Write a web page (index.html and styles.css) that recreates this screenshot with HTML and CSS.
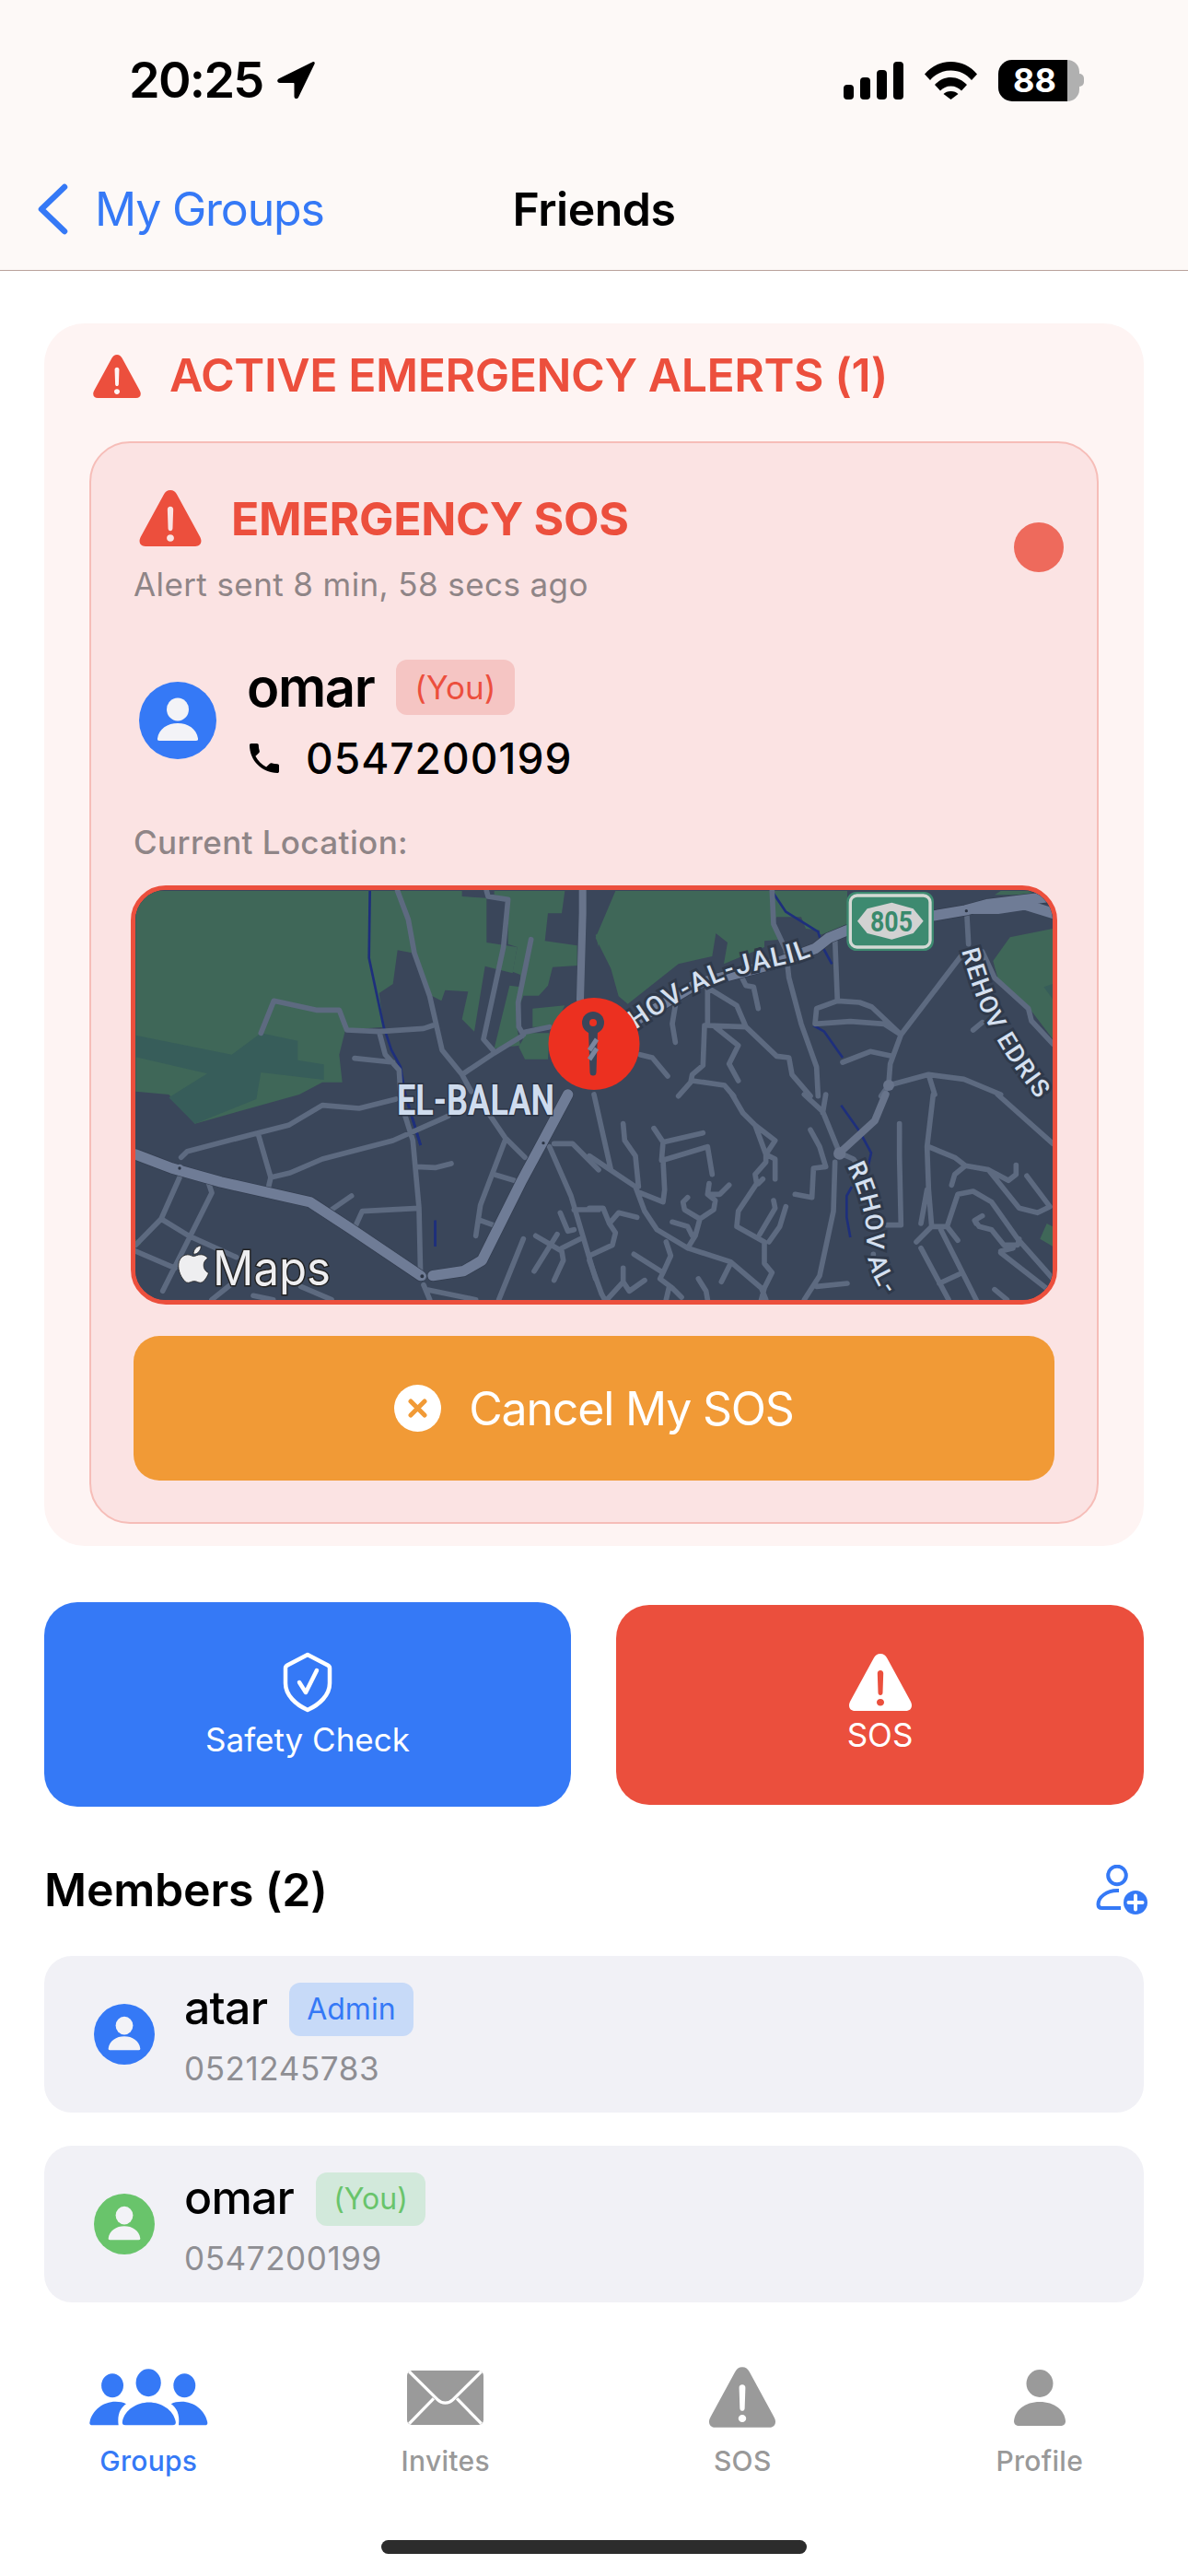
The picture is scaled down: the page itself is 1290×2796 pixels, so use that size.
FILE: index.html
```html
<!DOCTYPE html>
<html lang="en">
<head>
<meta charset="utf-8">
<title>Friends</title>
<link rel="stylesheet" href="styles.css">
</head>
<body>
<svg class="defs" aria-hidden="true">
  <symbol id="alert" viewBox="0 0 68 62">
    <path fill-rule="evenodd" d="M34 0c-3.4 0-5.6 1.7-7.4 5L1.8 50.5C.6 52.700 0 54.300 0 56c0 3.700 2.400 6 6.500 6h55c4.100 0 6.500-2.300 6.500-6 0-1.700-.6-3.300-1.800-5.500L41.400 5C39.600 1.700 37.400 0 34 0ZM34 18c2 0 3.300 1.300 3.200 3.300l-.7 21c-.1 1.700-1 2.700-2.500 2.700s-2.400-1-2.500-2.700l-.7-21c-.1-2 1.200-3.300 3.200-3.300Zm0 31c2.300 0 4 1.700 4 3.800s-1.700 3.800-4 3.800-4-1.700-4-3.800 1.700-3.800 4-3.800Z"/>
  </symbol>
  <symbol id="person" viewBox="0 0 84 84">
    <circle cx="42" cy="42" r="42"/>
    <ellipse class="person-cut" cx="42" cy="30" rx="12" ry="12.500"/>
    <path class="person-cut" d="M22 64c-1.500 0-2.300-.8-2-2.500C21.500 51 31 45 42 45s20.500 6 22 16.500c.3 1.700-.5 2.500-2 2.500Z"/>
  </symbol>
  <symbol id="phone" viewBox="3 3 18 18">
    <path d="M6.620 10.790c1.440 2.830 3.760 5.140 6.590 6.590l2.200-2.200c.27-.27.67-.36 1.020-.24 1.120.37 2.330.57 3.570.57.55 0 1 .45 1 1V20c0 .55-.45 1-1 1-9.390 0-17-7.610-17-17 0-.55.45-1 1-1h3.500c.55 0 1 .45 1 1 0 1.250.2 2.450.57 3.570.11.35.03.74-.25 1.020l-2.200 2.200z"/>
  </symbol>
</svg>

<div class="screen">
  <header class="top">
    <div class="status">
      <div class="status-left">
        <span class="time">20:25</span>
        <svg class="loc" viewBox="0 0 41 40"><path d="M38.500.3 2 18.300c-2.800 1.400-2.200 4.700.9 4.700h14.600c.7 0 1 .3 1 1v13.600c0 3 3.200 3.600 4.600.8L40.500 2.600C41.300.9 40.100-.4 38.500.3Z"/></svg>
      </div>
      <div class="status-right">
        <svg class="signal" viewBox="0 0 65 41"><rect x="0" y="25" width="11" height="16" rx="4"/><rect x="18" y="17" width="11" height="24" rx="4"/><rect x="36" y="9" width="11" height="32" rx="4"/><rect x="54" y="0" width="11" height="41" rx="4"/></svg>
        <svg class="wifi" viewBox="0 0 57 41"><path d="M0 13.500C7 5 17 0 28.500 0S50 5 57 13.500L51 20C45.500 13.500 37.500 9.500 28.500 9.500S11.500 13.500 6 20Z"/><path d="M11 25C16 20 21.500 17 28.500 17S41 20 46 25l-6 6.500c-3-3-6.500-5-11.500-5s-8.500 2-11.500 5Z"/><path d="M20.500 35c2-2 4.500-3 8-3s6 1 8 3l-8 6Z"/></svg>
        <div class="battery"><span class="battery-level">88</span><span class="battery-rest"></span><span class="battery-nub"></span></div>
      </div>
    </div>
    <nav class="nav">
      <a class="back"><svg class="chevron" viewBox="0 0 34 56"><path d="M30 4 5 28l25 24"/></svg><span>My Groups</span></a>
      <h1 class="nav-title">Friends</h1>
      <span></span>
    </nav>
  </header>

  <main class="content">
    <section class="panel">
      <div class="panel-head">
        <svg class="panel-icon"><use href="#alert"/></svg>
        <h2 class="panel-title">ACTIVE EMERGENCY ALERTS (1)</h2>
      </div>
      <article class="card">
        <div class="card-head">
          <div class="card-head-text">
            <div class="sos-row">
              <svg class="sos-icon"><use href="#alert"/></svg>
              <h3 class="sos-title">EMERGENCY SOS</h3>
            </div>
            <p class="sent">Alert sent 8 min, 58 secs ago</p>
          </div>
          <span class="dot"></span>
        </div>
        <div class="who">
          <svg class="who-avatar avatar-blue"><use href="#person"/></svg>
          <div>
            <div class="who-name-row">
              <span class="who-name">omar</span>
              <span class="badge badge-red">(You)</span>
            </div>
            <div class="who-phone-row">
              <svg class="phone-icon"><use href="#phone"/></svg>
              <span class="who-phone">0547200199</span>
            </div>
          </div>
        </div>
        <p class="loc-label">Current Location:</p>
        <div class="map">
          <svg class="map-svg" viewBox="147 966 996 445">
            <defs>
              <path id="path-jalil" d="M690 1118C730 1090 770 1066 810 1056S870 1046 900 1028"/>
              <path id="path-edris" d="M1044 1032C1052 1060 1060 1085 1072 1110 1088 1140 1105 1165 1128 1195"/>
              <path id="path-al" d="M920 1266C932 1290 942 1320 941 1350 941 1370 948 1390 965 1412"/>
            </defs>
            <rect class="m-bg" x="147" y="966" width="996" height="445"/>
            <g transform="translate(140 958) scale(.33333)">
              <path class="m-green" d="M22 27H1085V45L1165 50V195L1265 210 1250 295 1160 272 1125 485 1085 445 1105 355 1030 350 1018 385 980 365 930 230 875 220 860 330 815 360 830 470 705 480 685 560 695 650 630 650 555 690 215 785 130 690 22 680Z"/>
              <path class="m-green" d="M1190 27H1420L1410 100 1365 100 1355 190 1460 205 1460 270 1380 275 1365 335 1335 368 1285 368 1265 420 1262 460 1275 530 1190 540 1240 335 1275 340 1275 300 1250 290 1265 210 1235 200 1235 50 1190 40Z"/>
              <path class="m-green" d="M1315 410 1420 400 1385 470 1315 470Z"/>
              <path class="m-green" d="M1270 535 1290 575 1365 575 1370 490 1295 490Z"/>
              <path class="m-green" d="M1520 170 1530 165 1530 210Z"/>
              <path class="m-teal" d="M22 497 335 560 430 490 550 515 550 578 635 592 635 642 430 618 415 705 215 785 130 700 255 622 22 568Z"/>
              <path class="m-river" d="M785 27 782 245 800 330 830 470 855 545 885 600 900 690 950 855"/>
              <path class="m-river" d="M998 1100V1185"/>
              <path class="m-road" d="M430 490 472 385 610 415 685 415 710 480 815 485 960 475 990 465M815 485 835 560 880 610 885 690M735 572 860 585M875 27 910 120 930 230 980 370 1020 545 1085 625 1115 680M1235 55 1170 45 1165 27M1235 55 1220 210 1155 510 1190 550M1085 625 1190 555 1280 500 1290 487 1370 470M1310 185 1268 390 1270 470 1285 495"/>
              <path class="m-road m-mid" d="M1478 27 1478 100 1470 380"/>
            </g>
            <g transform="translate(640 958) scale(.33333)">
              <path class="m-green" d="M85 27 20 180 70 280 95 370 125 395 290 265 400 240 412 165 450 195 438 265 570 210 570 190 625 185 600 130 610 112 690 112 705 150 750 155 750 170 840 145 840 27Z"/>
              <path class="m-green" d="M1320 40 1340 27H1430L1460 40Z"/>
              <path class="m-green" d="M1510 150 1370 178 1315 255 1330 310 1430 405 1510 510Z"/>
              <path class="m-teal" d="M1480 340 1510 330V380Z"/>
              <path class="m-river" d="M600 35 640 95 745 160 760 210 790 265M730 465 765 485 825 570"/>
              <path class="m-road" d="M595 27 600 135 640 220 650 310 690 460 740 600 745 695M800 185 808 385M808 385 740 410 735 460 850 452 960 460 1015 495 920 405 880 390 808 385M1015 495 980 590 975 655M1210 240 1015 495M825 585 915 550 985 565M1230 110 1235 200M1280 225 1320 310 1430 410 1440 450 1510 525M975 660 1105 625 1220 640 1340 690M1105 625 1125 690M975 660 950 695M385 345 385 465 510 470 480 400 390 345M375 465 370 595 335 625 330 650 290 695M335 645 440 660 470 695M410 470 485 530 455 590 485 645M510 470 610 565 650 570 660 625 720 695M495 305 510 335 535 340 550 410M280 400 270 460 280 520M165 560 205 570 255 630M1250 480 1280 455"/>
              <path class="m-road m-main m-case" d="M150 450 350 330 600 265 735 215 780 180 840 155M1120 108 1225 90 1300 70 1510 45"/>
              <path class="m-road m-main" d="M150 450 350 330 600 265 735 215 780 180 840 155M1120 108 1225 90 1300 70 1510 45M1250 85 1330 85 1420 72 1510 100"/>
              <circle class="m-ring" cx="1228" cy="92" r="9"/>
              <circle class="m-node" cx="975" cy="660" r="18"/>
            </g>
            <g transform="translate(140 1188) scale(.33333)">
              <path class="m-green" d="M22 470 40 485 22 500Z"/>
              <path class="m-river" d="M900 0 950 165M998 410V495"/>
              <path class="m-road" d="M170 205 190 185 420 125 520 100 630 35 750 45 870 15M420 125 462 270 455 300M462 270 525 255 630 210 860 150 1040 70M260 290 270 320 195 470 110 640M165 270 105 405 22 490M105 405 195 460 350 530M22 510 150 565M660 375 725 330M735 435 760 380 945 370 950 590M900 70 925 150 945 370M935 235 1000 238 1050 225M1130 0 1225 140 1290 205M1225 150 1145 360 1130 460M1195 262 1255 280M1145 410 1195 428M1370 170 1440 330 1520 600M1385 160 1445 160 1530 245M1450 375 1530 375M1405 385 1430 445 1450 440M1325 460 1410 510 1415 540 1385 605M1395 455 1320 575M1410 500 1470 470M1285 470 1205 668M960 620 980 668M970 635 1130 668M405 655 470 668M560 625 660 668M330 620 270 668"/>
              <path class="m-road m-main m-case" d="M22 195 140 240 300 285 590 350 720 435 950 590M1430 0 1350 150 1280 280 1180 480 1150 540 1090 575 990 590"/>
              <path class="m-road m-main" d="M22 195 140 240 300 285 590 350 720 435 950 590M1430 0 1350 150 1280 280 1180 480 1150 540 1090 575 990 590"/>
              <circle class="m-ring" cx="165" cy="240" r="9"/>
              <circle class="m-ring" cx="955" cy="592" r="10"/>
              <circle class="m-ring" cx="1350" cy="158" r="9"/>
            </g>
            <g transform="translate(640 1188) scale(.33333)">
              <path class="m-green" d="M1490 420 1510 430V495L1468 470Z"/>
              <path class="m-river" d="M820 35 880 120 918 190 908 235M855 300 838 330 838 400 850 465"/>
              <path class="m-road" d="M15 0 70 245M0 200 150 300 180 380 220 440 320 500 460 545 560 630 575 668M110 95 115 150 150 200 160 300M210 110 240 155 370 125M240 155 235 215 385 170 400 260M240 215 245 310 240 350 165 320M0 370 45 370 65 420 85 450 75 490 0 525M65 420 95 385 155 400M390 290 385 325 410 345 405 375 360 405 310 375 305 350 320 335M390 325 425 325 455 295M360 405 345 460 320 500M270 415 320 430 335 460M465 0 500 60 540 100 605 150 575 195 540 100M575 195 605 210 605 275M575 195 575 220 540 260 545 290 485 380 480 430 570 480 570 550 595 580 570 630 560 668M550 290 565 275M600 345 605 370 555 455M640 365 620 430 585 480M145 520 240 580M240 580 265 525 250 480M240 580 230 600 270 630 300 660M260 625 250 668M110 565 110 610 130 640 180 605M110 610 60 665M355 600 380 640 385 668M460 550 430 610M0 540 40 650 50 668M700 0 760 55 815 190M770 0 760 60M720 115 750 170 770 235M770 235 730 240 725 335 670 325M800 220 795 380 750 590 700 668M740 625 840 615M815 190 860 210 895 260M925 520V560M1010 95 1010 200 1015 425 970 425M1120 0 1100 170 1105 310 1115 430 1065 480M1100 310 1080 420M1105 170 1190 205 1225 232 1300 245 1365 280 1390 260 1390 230M1225 232 1190 260 1180 295M1300 245 1400 370 1460 385 1500 365 1425 265M1330 0 1510 160M1115 430 1165 430 1200 475M1145 440 1260 668M1080 500 1170 668M1140 615 1205 585M1165 430 1185 370 1200 325 1250 315 1310 350 1395 470 1510 600M1260 420 1255 410 1280 395M1255 410 1270 430 1310 440 1350 490 1395 490 1400 470M1340 510 1380 500M1340 515 1500 640M1320 635 1360 668"/>
              <path class="m-road m-mid" d="M965 0 930 85 815 190"/>
              <circle class="m-node" cx="815" cy="192" r="20"/>
            </g>
            <text class="m-city" x="431" y="1210" textLength="171" lengthAdjust="spacingAndGlyphs">EL-BALAN</text>
            <text class="m-street m-street-lg"><textPath href="#path-jalil">HOV-AL-JALIL</textPath></text>
            <text class="m-street"><textPath href="#path-edris">REHOV EDRIS</textPath></text>
            <text class="m-street"><textPath href="#path-al">REHOV AL-</textPath></text>
            <g transform="translate(640 958) scale(.33333)">
              <rect class="shield-out" x="838" y="30" width="284" height="192" rx="32"/>
              <rect class="shield-line" x="850" y="42" width="260" height="168" rx="22"/>
              <path class="shield-hex" d="M873 125 905 85 985 65 1055 85 1088 125 1055 165 985 185 905 165Z"/>
            </g>
            <text class="m-shield" x="945" y="1011" textLength="46" lengthAdjust="spacingAndGlyphs">805</text>
            <path class="pin-bg" d="M645 1083a49.500 50 0 1 0 .01 0Z"/>
            <circle class="pin-head" cx="644" cy="1110" r="12"/>
            <circle class="pin-dot" cx="644" cy="1110" r="4"/>
            <path class="pin-needle" d="M639 1118h10l-1.500 46c-.2 2.500-1.200 3.500-3.500 3.500s-3.300-1-3.500-3.500Z"/>
            <path class="pin-stripe" d="M640 1150 648 1138M640 1140 648 1128"/>
            <path class="m-apple" transform="translate(190 1352) scale(1.680)" d="M12.152 6.896c-.948 0-2.415-1.078-3.960-1.040-2.040.027-3.910 1.183-4.961 3.014-2.117 3.675-.546 9.103 1.519 12.090 1.013 1.454 2.208 3.090 3.792 3.039 1.520-.065 2.090-.987 3.935-.987 1.831 0 2.350.987 3.960.948 1.637-.026 2.676-1.480 3.676-2.948 1.156-1.688 1.636-3.325 1.662-3.415-.039-.013-3.182-1.221-3.220-4.857-.026-3.040 2.480-4.494 2.597-4.559-1.429-2.090-3.623-2.324-4.390-2.376-2-.156-3.675 1.090-4.610 1.090zM15.530 3.830c.843-1.012 1.400-2.427 1.245-3.830-1.207.052-2.662.805-3.532 1.818-.78.896-1.454 2.338-1.273 3.714 1.338.104 2.715-.688 3.559-1.701"/>
            <text class="m-maps" x="231" y="1395" textLength="128" lengthAdjust="spacingAndGlyphs">Maps</text>
          </svg>
        </div>
        <button class="cancel">
          <svg class="cancel-icon" viewBox="0 0 51 51"><circle cx="25.500" cy="25.500" r="25.500"/><path d="M18 18l15 15M33 18 18 33"/></svg>
          <span>Cancel My SOS</span>
        </button>
      </article>
    </section>

    <div class="actions">
      <button class="action action-blue">
        <svg class="shield-icon" viewBox="0 0 54 66"><path d="M27 3 49 14.500c1.300.7 2 1.700 2 3.200V34c0 13-11 23-24 29C14 57 3 47 3 34V17.700c0-1.500.7-2.500 2-3.200Z"/><path d="M18 33l7 11L37 20"/></svg>
        <span>Safety Check</span>
      </button>
      <button class="action action-red">
        <svg class="action-alert"><use href="#alert"/></svg>
        <span>SOS</span>
      </button>
    </div>

    <div class="members-head">
      <h2 class="members-title">Members (2)</h2>
      <svg class="add-icon" viewBox="0 0 56 54"><circle cx="23" cy="11.500" r="9.800"/><path d="M25 28h-2C12 28 2.500 35 2.500 43c0 2.500 1.500 4 4 4H27"/><circle class="add-fill" cx="43" cy="41" r="13"/><path class="add-plus" d="M43 33.500v15M35.500 41h15"/></svg>
    </div>

    <div class="member-list">
      <div class="member">
        <svg class="m-avatar avatar-blue"><use href="#person"/></svg>
        <div>
          <div class="m-name-row"><span class="m-name">atar</span><span class="badge-sm badge-blue">Admin</span></div>
          <div class="m-phone">0521245783</div>
        </div>
      </div>
      <div class="member">
        <svg class="m-avatar avatar-green"><use href="#person"/></svg>
        <div>
          <div class="m-name-row"><span class="m-name">omar</span><span class="badge-sm badge-green">(You)</span></div>
          <div class="m-phone">0547200199</div>
        </div>
      </div>
    </div>
  </main>

  <nav class="tabs">
    <a class="tab tab-on">
      <span class="tab-icon"><svg class="i-groups" viewBox="50 50 388 187"><ellipse cx="125" cy="105" rx="36" ry="39"/><ellipse cx="243" cy="96" rx="41" ry="45"/><ellipse cx="361" cy="105" rx="36" ry="39"/><path d="M168 235c-9 0-12-5-10-13 7-37 47-62 87-62s80 25 87 62c2 8-1 13-10 13Z"/><path d="M60 235c-8 0-11-4-9-11 8-38 44-66 84-66 14 0 25 2 35 7-17 12-30 32-25 70Z"/><path d="M427 235c8 0 11-4 9-11-8-38-44-66-84-66-14 0-25 2-35 7 17 12 30 32 25 70Z"/></svg></span>
      <span class="tab-label">Groups</span>
    </a>
    <a class="tab">
      <span class="tab-icon"><svg class="i-mail" viewBox="1085 55 250 177"><rect class="mail-body" x="1085" y="55" width="250" height="177" rx="16"/><path class="mail-lines" d="M1092 58 1185 150c14 14 36 14 50 0L1328 58M1092 228 1172 146M1328 228 1248 146"/></svg></span>
      <span class="tab-label">Invites</span>
    </a>
    <a class="tab">
      <span class="tab-icon"><svg class="i-alert"><use href="#alert"/></svg></span>
      <span class="tab-label">SOS</span>
    </a>
    <a class="tab">
      <span class="tab-icon"><svg class="i-person" viewBox="0 0 56 61"><ellipse cx="28" cy="15" rx="14.500" ry="15"/><path d="M6 61c-4 0-6-2-6-5C1 44 12 35 28 35s27 9 28 21c0 3-2 5-6 5Z"/></svg></span>
      <span class="tab-label">Profile</span>
    </a>
  </nav>
  <div class="home-bar"></div>
</div>
</body>
</html>
```

FILE: styles.css
```css
* { box-sizing: border-box; margin: 0; padding: 0; }
html, body { background: #fff; }
body { font-family: Inter, "Noto Sans", "Liberation Sans", sans-serif; color: #000; width: 1290px; height: 2796px; overflow: hidden; }
.defs { position: absolute; width: 0; height: 0; }
svg { display: block; }
.screen { width: 1290px; height: 2796px; display: flex; flex-direction: column; }

.top { height: 294px; background: #fdf9f7; border-bottom: 1px solid #b9a29b; flex: none; padding-top: 55px; }
.status { display: flex; justify-content: space-between; align-items: center; height: 64px; padding: 0 113px 0 140px; }
.status-left { display: flex; align-items: center; gap: 15px; }
.time { font-size: 54px; line-height: 64px; font-weight: 600; letter-spacing: -1.700px; }
.loc { width: 41px; height: 40px; fill: #000; }
.status-right { display: flex; align-items: center; gap: 23px; }
.signal { width: 65px; height: 41px; fill: #000; }
.wifi { width: 57px; height: 41px; fill: #000; }
.battery { width: 93px; height: 45px; display: flex; align-items: center; }
.battery-level { width: 75px; height: 45px; background: #000; color: #fff; border-radius: 15px 0 0 15px; font-size: 36px; font-weight: 700; line-height: 45px; text-align: center; padding-left: 4px; }
.battery-rest { width: 13px; height: 45px; background: #b0b0b0; border-radius: 0 13px 13px 0; }
.battery-nub { width: 5px; height: 14px; background: #b0b0b0; border-radius: 0 7px 7px 0; }

.nav { display: grid; grid-template-columns: 1fr auto 1fr; align-items: center; height: 60px; margin-top: 78px; }
.back { display: flex; align-items: center; gap: 29px; padding-left: 40px; color: #3579f6; font-size: 50px; line-height: 60px; letter-spacing: -1.200px; }
.chevron { width: 34px; height: 56px; fill: none; stroke: #3579f6; stroke-width: 6.500; stroke-linecap: round; stroke-linejoin: round; }
.nav-title { font-size: 50px; line-height: 60px; font-weight: 600; letter-spacing: -.5px; }

.content { padding: 57px 48px 0; flex: none; }
.panel { background: #fef4f3; border-radius: 44px; padding: 26px 49px 24px; }
.panel-head { display: flex; align-items: center; gap: 30px; margin: 0 0 42px 3px; height: 60px; }
.panel-icon { width: 54px; height: 47px; fill: #ec4f3d; margin-top: 3px; }
.panel-title { font-size: 50px; line-height: 60px; font-weight: 600; color: #ec4f3d; letter-spacing: -.45px; white-space: nowrap; }

.card { background: #fbe3e3; border: 2px solid #f6bdb8; border-radius: 44px; padding: 51px 43px 45px; }
.card-head { display: flex; justify-content: space-between; align-items: center; }
.card-head-text { margin-left: 3px; }
.sos-row { display: flex; align-items: center; gap: 32px; margin-left: 6px; height: 61px; }
.sos-icon { width: 68px; height: 61px; fill: #ec4f3d; }
.sos-title { font-size: 50px; line-height: 60px; font-weight: 700; color: #ec4f3d; letter-spacing: -.3px; }
.sent { font-size: 35px; line-height: 42px; color: #8f8587; margin-top: 20px; letter-spacing: .4px; }
.dot { width: 54px; height: 54px; border-radius: 50%; background: #ee6a5c; margin-right: -7px; }

.who { display: flex; align-items: center; gap: 33px; margin: 56px 0 0 9px; }
.who-avatar { width: 84px; height: 84px; margin-top: 2px; flex: none; }
.avatar-blue { fill: #3579f6; }
.avatar-green { fill: #69c46b; }
.who-avatar .person-cut { fill: #fbe3e3; }
.person-cut { fill: #f3f3f7; }
.who-name-row { display: flex; align-items: center; gap: 24px; height: 70px; }
.who-name { font-size: 58px; line-height: 70px; font-weight: 600; letter-spacing: -1.400px; }
.badge { height: 60px; line-height: 60px; border-radius: 12px; padding: 0 20px; font-size: 35px; }
.badge-red { background: #f5c5c3; color: #ec4f3d; }
.who-phone-row { display: flex; align-items: center; gap: 27px; height: 56px; margin-top: 14px; }
.phone-icon { width: 36px; height: 32px; fill: #000; margin-left: 1px; }
.who-phone { font-size: 46px; line-height: 56px; font-weight: 500; letter-spacing: 1px; }

.loc-label { font-size: 35px; line-height: 42px; font-weight: 500; color: #8f8587; margin: 42px 0 26px 3px; letter-spacing: .4px; }
.map { height: 455px; border: 5px solid #ec4f3d; border-radius: 38px; overflow: hidden; background: #3a465a; }
.map-svg { width: 996px; height: 445px; }
.m-bg { fill: #3a465a; }
.m-green { fill: #3f6758; }
.m-teal { fill: #375d5a; }
.m-river { fill: none; stroke: #1e2f7c; stroke-width: 8; stroke-linejoin: round; }
.m-road { fill: none; stroke: #5d6a80; stroke-width: 17; stroke-linecap: round; stroke-linejoin: round; }
.m-mid { stroke: #68748b; stroke-width: 24; }
.m-main { stroke: #6f7c96; stroke-width: 34; }
.m-case { stroke: #333d4f; stroke-width: 38; }
.m-ring { fill: #2b3444; stroke: #6f7c96; stroke-width: 8; }
.m-node { fill: #68748b; }
.m-city { font-family: Roboto, sans-serif; font-size: 46px; font-weight: 700; fill: #cfdcee; stroke: #2b3444; stroke-width: 3px; paint-order: stroke; }
.m-street { font-family: Roboto, sans-serif; font-size: 27px; font-weight: 500; letter-spacing: 1.500px; fill: #d5e0f0; stroke: #2f394a; stroke-width: 6px; paint-order: stroke; }
.m-street-lg { font-size: 29px; letter-spacing: 2px; }
.shield-out { fill: #3d8a70; }
.shield-line { fill: #3d8a70; stroke: #d4d9d4; stroke-width: 10; }
.shield-hex { fill: #d2d2d2; }
.m-shield { font-family: Roboto, sans-serif; font-size: 32px; font-weight: 700; fill: #3a8a6d; }
.pin-bg { fill: #ec3020; }
.pin-head, .pin-needle { fill: #3a465a; }
.pin-dot { fill: #ec3020; }
.pin-stripe { stroke: #7a869e; stroke-width: 5; fill: none; }
.m-apple { fill: #eeeef0; stroke: #222; stroke-width: .5px; }
.m-maps { font-size: 52px; font-weight: 400; fill: #eeeef0; stroke: #222; stroke-width: 3px; paint-order: stroke; }

.cancel { display: flex; align-items: center; justify-content: center; gap: 30px; width: 1000px; height: 157px; margin: 34px 0 0 3px; background: #f19a36; border: 0; border-radius: 28px; color: #fff; font: 400 50px/60px Inter, sans-serif; letter-spacing: -1.200px; }
.cancel-icon { width: 51px; height: 51px; }
.cancel-icon circle { fill: #fff; }
.cancel-icon path { stroke: #f19a36; stroke-width: 5; stroke-linecap: round; fill: none; }

.actions { display: grid; grid-template-columns: 572px 573px; column-gap: 49px; align-items: center; margin-top: 61px; }
.action { display: flex; flex-direction: column; align-items: center; border: 0; border-radius: 36px; color: #fff; font: 400 35px/42px Inter, sans-serif; }
.action-blue { height: 222px; background: #3579f6; padding-top: 54px; gap: 8px; }
.action-red { height: 217px; background: #eb4f3d; padding-top: 53px; gap: 5px; }
.shield-icon { width: 54px; height: 66px; fill: none; stroke: #fff; stroke-width: 4.500; stroke-linejoin: round; stroke-linecap: round; }
.action-alert { width: 68px; height: 62px; fill: #fff; }

.members-head { display: flex; justify-content: space-between; align-items: center; height: 58px; margin-top: 61px; }
.members-title { font-size: 50px; line-height: 58px; font-weight: 600; letter-spacing: -.2px; }
.add-icon { width: 56px; height: 54px; margin-right: -4px; fill: none; stroke: #3579f6; stroke-width: 4; }
.add-icon .add-fill { fill: #3579f6; stroke: #fff; stroke-width: 0; }
.add-icon .add-plus { stroke: #fff; stroke-width: 4; stroke-linecap: round; }

.member-list { display: flex; flex-direction: column; gap: 36px; margin-top: 43px; }
.member { display: flex; align-items: center; gap: 32px; height: 170px; padding-left: 54px; background: #f1f1f6; border-radius: 30px; }
.m-avatar { width: 66px; height: 66px; flex: none; }
.m-name-row { display: flex; align-items: center; gap: 24px; height: 60px; }
.m-name { font-size: 50px; line-height: 58px; font-weight: 500; letter-spacing: -.8px; position: relative; bottom: 2px; }
.badge-sm { height: 58px; line-height: 58px; border-radius: 12px; padding: 0 19px; font-size: 32px; }
.badge-blue { background: #c7daf8; color: #3579f6; }
.badge-green { background: #d2e9db; color: #69c46b; }
.m-phone { font-size: 35px; line-height: 42px; color: #8e8e93; margin-top: 13px; letter-spacing: .6px; }

.tabs { display: grid; grid-template-columns: repeat(4, 1fr); margin-top: 70px; flex: none; }
.tab { display: flex; flex-direction: column; align-items: center; color: #999; }
.tab-on { color: #3579f6; }
.tab-icon { height: 66px; display: flex; align-items: center; }
.i-groups { width: 129px; height: 62px; fill: #3579f6; }
.i-mail { width: 83px; height: 59px; }
.mail-body { fill: #9a9a9a; }
.mail-lines { fill: none; stroke: #fff; stroke-width: 10; }
.i-alert { width: 72px; height: 66px; fill: #9a9a9a; }
.i-person { width: 56px; height: 61px; fill: #9a9a9a; }
.tab-label { font-size: 30px; line-height: 36px; font-weight: 500; margin-top: 18px; letter-spacing: .3px; }

.home-bar { width: 462px; height: 15px; border-radius: 8px; background: #2c2c2c; margin: 68px auto 0; flex: none; }
```
